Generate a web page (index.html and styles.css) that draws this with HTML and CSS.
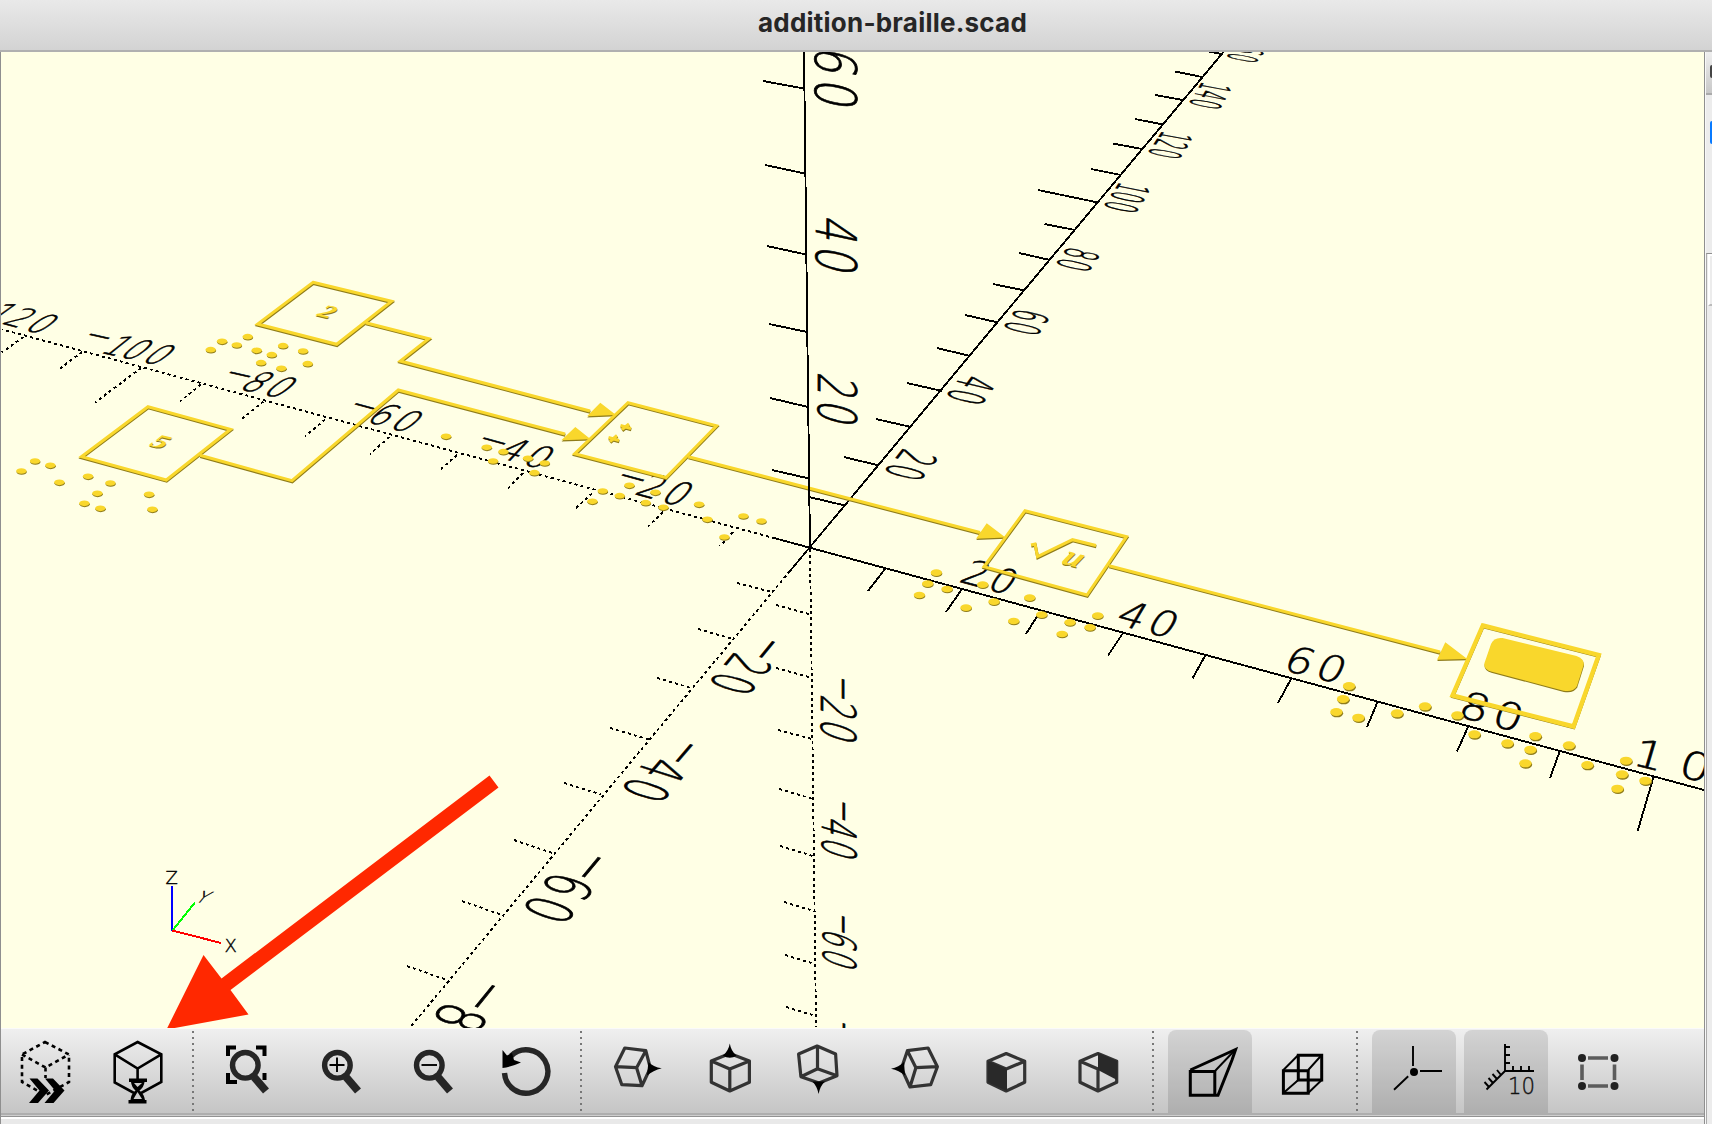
FILE: index.html
```html
<!DOCTYPE html>
<html lang="en">
<head>
<meta charset="utf-8">
<title>addition-braille.scad</title>
<link rel="stylesheet" href="styles.css">
</head>
<body>
<div class="window">
<header class="titlebar"><span class="title">addition-braille.scad</span></header>
<div class="workspace">
<main class="viewer">
<svg class="scene" viewBox="1 52 1703 976" width="1703" height="976">
<defs>
<marker id="dotS" class="dot" markerUnits="userSpaceOnUse" markerWidth="60" markerHeight="60" refX="0" refY="0" viewBox="-30 -30 60 60"><ellipse class="shade" cx="1" cy="3" rx="15.500" ry="8.500"/><ellipse class="face" rx="15.500" ry="8.500"/></marker>
<marker id="dotM" class="dot" markerUnits="userSpaceOnUse" markerWidth="60" markerHeight="60" refX="0" refY="0" viewBox="-30 -30 60 60"><ellipse class="shade" cx="1" cy="3" rx="17" ry="10"/><ellipse class="face" rx="17" ry="10"/></marker>
<marker id="dotL" class="dot" markerUnits="userSpaceOnUse" markerWidth="60" markerHeight="60" refX="0" refY="0" viewBox="-30 -30 60 60"><ellipse class="shade" cx="2" cy="4" rx="18.500" ry="12"/><ellipse class="face" rx="18.500" ry="12"/></marker>
</defs>

<!-- axes and tick marks -->
<g class="lines">
<path d="M775 538.300L1704 790M790 571L1016 300L1223.500 52"/>
<path d="M763 81L804 88.500M765 165L805 173.500M767 246L806 254.500M769 324L807 332M770 398L808 407M772 470L809 478.500"/>
<path d="M809 497L845 505.500M844 457L879 465.500M876 419L911 427M907 383L942 391M937 348L970 356M965 315L998 322.500M993 284L1024.500 290.500M1019 253L1050 260M1044.500 224L1075 230M1038 190L1098 202.500M1091 169L1121 175M1113 143.500L1142 149M1135 119L1163 124.500M1155 95L1183 100M1175 71.500L1202 77M1209 51.700L1221.600 54"/>
<path d="M885 569L868 591M962 589L946 612M1038 615L1026 634M1123 633L1108 655.500M1205.500 655L1192.500 678.500M1291 679L1278 703M1377.500 702L1367 727M1468 727L1457 751.500M1559.500 752L1550 778M1653.500 777L1637.500 831.500"/>
<g class="dashed">
<path d="M775 538.300L1.700 329.300M790 571L410 1027.500M810 549L811 623L816 1027"/>
<path d="M776 605L809 614M776 668L812 678M778 730L812 739M779 789L813 799M780 846L813 856M784 902L814 911M785 955L815 964M786 1007L816 1016"/>
<path d="M737 583L772 592M698 629L731 638.500M657 678L691 688M610 728L649 739.500M564 783L601 794.500M514 840L554 853.500M462 901L502 915M407 966L447 980"/>
<path d="M733 532L720 546M663 512L648 526.500M592 493.500L576 508M523 473L508 488.500M457 455L441 469M389.500 437L370 454M325 419.500L305 436.500M263.500 401.500L242 418.500M201 384.500L180 401.500M141 368L95 402.500M82 352L60 368.500M23.500 337L1.700 352.500"/>
</g>
</g>

<!-- scale labels, laid in the plane of their axis -->
<g class="labels">
<g transform="translate(0 260) scale(.33333)">
<text transform="matrix(44 12 -69 49 73 209) scale(.0196 .0137)" x="-239 -146 -82 -6.600" y="-20 0 0 0">−120</text>
<text transform="matrix(45 10 -67 53 425 305) scale(.0196 .0137)" x="-239 -146 -82 -6.600" y="-20 0 0 0">−100</text>
<text transform="matrix(47 11 -67 54 788 403) scale(.0196 .0137)" x="-161 -82 -6.600" y="-14 0 0">−80</text>
<text transform="matrix(48 13 -63 55 1169 504) scale(.0196 .0137)" x="-161 -82 -6.600" y="-14 0 0">−60</text>
</g>
<g transform="translate(420 360) scale(.33333)">
<text transform="matrix(51 14 -55 58 307 312) scale(.0196 .0137)" x="-161 -82 -6.600" y="-14 0 0">−40</text>
<text transform="matrix(51 14 -57 62 722 424) scale(.0196 .0137)" x="-161 -82 -6.600" y="-14 0 0">−20</text>
</g>
<g transform="translate(740 0) scale(.35077 .33333)">
<text transform="matrix(0 66 -119 -24 214 240) scale(.0196 .0137)" x="-82 -6.600">60</text>
<text transform="matrix(0 61 -116 -27 217 740) scale(.0196 .0137)" x="-82 -6.600">40</text>
<text transform="matrix(-11 15 -82 -16 1398 159) scale(.0196 .0137)" x="-146 -82 -6.600">160</text>
<text transform="matrix(-10 18 -85 -17 1290 295) scale(.0196 .0137)" x="-146 -82 -6.600">140</text>
<text transform="matrix(-11 18 -88 -17 1174 443) scale(.0196 .0137)" x="-146 -82 -6.600">120</text>
<text transform="matrix(-12 20 -89 -19 1049 602) scale(.0196 .0137)" x="-146 -82 -6.600">100</text>
<text transform="matrix(-14 22 -92 -21 914 774) scale(.0196 .0137)" x="-82 -6.600">80</text>
</g>
<g transform="translate(740 300) scale(.33333)">
<text transform="matrix(-16 24 -101 -22 806 62) scale(.0196 .0137)" x="-82 -6.600">60</text>
<text transform="matrix(-20 27 -105 -25 637 265) scale(.0196 .0137)" x="-82 -6.600">40</text>
<text transform="matrix(-23 29 -107 -26 454 490) scale(.0196 .0137)" x="-82 -6.600">20</text>
<text transform="matrix(0 54 -116 -27 233 302) scale(.0196 .0137)" x="-82 -6.600">20</text>
<text transform="matrix(55 15 -45 67 742 868) scale(.0196 .0137)" x="-82 -6.600">20</text>
</g>
<g transform="translate(900 480) scale(.33333)">
<text transform="matrix(62 17 -42 71 740 457) scale(.0196 .0137)" x="-82 -6.600">40</text>
</g>
<g transform="translate(1280 600) scale(.33333)">
<text transform="matrix(64 16 -36 74 106 234) scale(.0196 .0137)" x="-82 -6.600">60</text>
<text transform="matrix(68 18 -29 78 638 377) scale(.0196 .0137)" x="-82 -6.600">80</text>
<text transform="matrix(72 18 -24 81 1306 556) scale(.0196 .0137)" x="-180 -82 -6.600">100</text>
</g>
<g transform="translate(380 620) scale(.33333)">
<text transform="matrix(-31 38 -119 -35 1015 155) scale(.0196 .0137)" x="-161 -82 -6.600" y="-14 0 0">−20</text>
<text transform="matrix(-35 41 -121 -39 756 471) scale(.0196 .0137)" x="-161 -82 -6.600" y="-14 0 0">−40</text>
<text transform="matrix(-39 47 -129 -44 463 824) scale(.0196 .0137)" x="-161 -82 -6.600" y="-14 0 0">−60</text>
<text transform="matrix(-42 52 -132 -46 135 1222) scale(.0196 .0137)" x="-161 -82 -6.600" y="-14 0 0">−80</text>
<text transform="matrix(0 47 -105 -32 1323 297) scale(.0196 .0137)" x="-161 -82 -6.600" y="-14 0 0">−20</text>
<text transform="matrix(0 42 -103 -31 1326 653) scale(.0196 .0137)" x="-161 -82 -6.600" y="-14 0 0">−40</text>
<text transform="matrix(0 39 -99 -33 1329 984) scale(.0196 .0137)" x="-161 -82 -6.600" y="-14 0 0">−60</text>
<text transform="matrix(0 37 -97 -32 1332 1300) scale(.0196 .0137)" x="-161 -82 -6.600" y="-14 0 0">−80</text>
</g>
</g>

<!-- block diagram, drawn once as the shaded underside and once as the lit face -->
<g class="under" transform="translate(.3 1.200)">
<g class="model">
<path d="M365.700 322.700L428.700 338.700L400.300 361L590 411M200 455.300L292 480.700L398.300 390L565 434M688.300 456.700L980 532.500M1109 565.700L1440 652"/>
<path d="M313 282.300L391.500 301.300L336.700 344.300L257.700 324ZM148 406.700L230.500 429.300L166.300 480L81.500 456.700ZM628 402.700L716.500 425.700L666 477.500L574.700 453.700ZM1025 510.700L1126.500 536.700L1087 595L984 566.700ZM1482.800 625.500L1598.800 655L1573.500 726.500L1452.500 695.500Z"/>
<path d="M1031 545L1035 544L1037.500 556.500L1072.500 539.700L1096 545.500"/>
<path d="M620.500 425.500L631 428.500M629 424L622 429.500M608.500 437.500L619 440.500M617 435.500L610 441.500"/>
</g>
<g class="solid">
<path d="M600.300 402.700L616 415L587 416.300ZM575.300 427L590.700 439.300L561.300 440.300ZM986.700 523.300L1005.500 537.500L976 538.700ZM1445.300 642.300L1467.300 659L1437 659.700Z"/>
<path d="M1502.500 638L1576.500 656Q1585 659 1583.500 665.500L1577 686Q1573.500 692.500 1563.500 690.700L1491 671.500Q1483 669 1484.500 663L1491 644Q1494 637 1502.500 638Z"/>
<text class="num" transform="matrix(1.150 .28 -.8 .64 314.500 315)">2</text>
<text class="num" transform="matrix(1.200 .3 -.8 .66 147.500 445)">5</text>
<text class="var" transform="matrix(1 .26 -.55 .8 1060 563)">u</text>
</g>
</g>
<g class="lit">
<g class="model">
<path d="M365.700 322.700L428.700 338.700L400.300 361L590 411M200 455.300L292 480.700L398.300 390L565 434M688.300 456.700L980 532.500M1109 565.700L1440 652"/>
<path d="M313 282.300L391.500 301.300L336.700 344.300L257.700 324ZM148 406.700L230.500 429.300L166.300 480L81.500 456.700ZM628 402.700L716.500 425.700L666 477.500L574.700 453.700ZM1025 510.700L1126.500 536.700L1087 595L984 566.700Z"/>
<path class="thick" d="M1482.800 625.500L1598.800 655L1573.500 726.500L1452.500 695.500Z"/>
<path d="M1031 545L1035 544L1037.500 556.500L1072.500 539.700L1096 545.500"/>
<path d="M620.500 425.500L631 428.500M629 424L622 429.500M608.500 437.500L619 440.500M617 435.500L610 441.500"/>
</g>
<g class="solid">
<path d="M600.300 402.700L616 415L587 416.300ZM575.300 427L590.700 439.300L561.300 440.300ZM986.700 523.300L1005.500 537.500L976 538.700ZM1445.300 642.300L1467.300 659L1437 659.700Z"/>
<path d="M1502.500 638L1576.500 656Q1585 659 1583.500 665.500L1577 686Q1573.500 692.500 1563.500 690.700L1491 671.500Q1483 669 1484.500 663L1491 644Q1494 637 1502.500 638Z"/>
<text class="num" aria-hidden="true" transform="matrix(1.150 .28 -.8 .64 314.500 315)">2</text>
<text class="num" aria-hidden="true" transform="matrix(1.200 .3 -.8 .66 147.500 445)">5</text>
<text class="var" aria-hidden="true" transform="matrix(1 .26 -.55 .8 1060 563)">u</text>
</g>
</g>

<!-- braille dots -->
<g class="braille">
<polyline class="small" transform="translate(0 260) scale(.33333)" points="632,269 666,244 710,255 743,230 770,271 815,284 849,257 909,273 783,308 844,325 923,311 105,603 64,633 151,616 178,667 264,649 331,669 292,700 253,730 301,745 447,703 457,748"/>
<polyline class="small" transform="translate(420 360) scale(.33333)" points="78,229 200,262 250,275 219,303 324,295 374,309 343,338 548,393 517,424 599,407 628,376 706,397 677,428 730,442 837,433 862,478 913,531 970,468 1024,483"/>
<polyline class="medium" transform="translate(740 300) scale(.33333)" points="589,818 563,851 621,867 538,885 728,854 678,923 762,905 869,893 821,963"/>
<polyline class="medium" transform="translate(900 480) scale(.33333)" points="425,404 510,427 570,442 593,407 486,462"/>
<polyline class="large" transform="translate(1280 600) scale(.33333)" points="207,258 189,297 169,336 235,353 351,340 435,319 532,346 583,403 682,430 766,408 751,449 736,490 867,436 922,495 1038,482 1026,523 1012,566 1096,542"/>
</g>

<path class="zaxis" d="M804 52L807 310L810 548"/>

<!-- orientation gizmo -->
<g class="gizmo">
<path stroke="#00f" d="M172 886V931"/><path stroke="#0f0" d="M172.500 930.500L195 902.500"/><path stroke="#f00" d="M172.500 930.500L221 943"/>
<text x="165.500" y="883.500">Z</text>
<text transform="matrix(1 .1 -.7 .85 194 902)">Y</text>
<text x="224.500" y="952">X</text>
</g>
<path class="pointer" d="M489.500 775.500L498.500 787.500L230.500 990L248.500 1014.500L166.500 1029.500L203.500 955L221.500 978.500Z"/>
</svg>

<nav class="toolbar">
<button><svg viewBox="4 1030 84 83"><path class="line dash" d="M45 1042L69 1054.500V1082L45.500 1095L22 1082V1054.500ZM22 1054.500L45.500 1067.500L69 1054.500M45.500 1067.500V1078"/><path d="M29.500 1078.500H37.500L49 1090.500L38 1103H29L39.500 1090.500ZM45 1078.500H53L64.500 1090.500L53.500 1103H44.500L55 1090.500Z"/></svg></button>
<button><svg viewBox="96 1030 84 83"><path class="line" d="M137.600 1042L161.300 1054.300V1082L137.600 1095L114.700 1082.500V1054.300ZM114.700 1054.300L137.600 1068.500L161.300 1054.300M137.600 1068.500V1079"/><path d="M129 1078.500H147V1082H144.500Q144 1087 139.500 1090.500Q144 1094 145 1100H146.500V1103.500H128.500V1100H130.500Q131 1094 135.500 1090.500Q131.500 1087 131 1082H129Z"/><path class="cut" d="M134 1083H142L137.500 1087ZM133.500 1099L137.500 1092L142 1099Z"/></svg></button>
<span class="sep"></span>
<button><svg viewBox="208 1030 84 83"><path class="line w4" d="M228 1056V1047.500H236M256 1047.500H264.500V1056M228 1073V1082H237M264.500 1073V1080"/><circle class="lens" cx="245.300" cy="1065.300" r="12.800"/><path class="handle" d="M254 1077L266 1091"/></svg></button>
<button><svg viewBox="300 1030 84 83"><circle class="lens" cx="337.400" cy="1065.300" r="12.800"/><path class="handle" d="M346 1077L358 1091"/><path class="line w2" d="M329.500 1065H344.500M337 1057.500V1072"/></svg></button>
<button><svg viewBox="392 1030 84 83"><circle class="lens" cx="429.300" cy="1065.300" r="12.800"/><path class="handle" d="M438 1077L450 1091"/><path class="line w2" d="M421.500 1065H437"/></svg></button>
<button><svg viewBox="484 1030 84 83"><path class="lens" d="M511 1056A21.700 21.700 0 1 1 504.500 1073"/><path d="M502.500 1050L507 1055.500L512 1053L514 1060L521 1062.500Q511 1067 502.500 1068Z"/></svg></button>
<span class="sep"></span>
<button><svg viewBox="596 1030 84 83"><path class="cube" d="M624.800 1048L645.800 1050.700L650.300 1068L642 1085.700L621.800 1084.700L615.500 1066.700ZM615.500 1066.700L636.600 1067.700L645.800 1050.700M636.600 1067.700L642 1085.700"/><path d="M648.400 1062Q653 1067 661.800 1068.300Q653 1070.500 647 1075.500Z"/></svg></button>
<button><svg viewBox="688 1030 84 83"><path class="cube" d="M729.800 1053.500L749.400 1061V1082.300L729.800 1091L711.300 1082.300V1061ZM711.300 1061L729.800 1069L749.400 1061M729.800 1069V1091"/><path d="M729.800 1043.500Q731 1051 736.500 1055.700Q730 1060 722.800 1055.700Q728.500 1051 729.800 1043.500Z"/></svg></button>
<button><svg viewBox="780 1030 84 83"><path class="cube" d="M817.100 1046L835.600 1054L837 1075.700L819 1083L800.900 1076.700L798.600 1054ZM800.900 1076.700L817.500 1068.700L837 1075.700M817.500 1068.700V1046"/><path d="M812.300 1081.500H825Q820 1086 818.600 1094Q817 1086 812.300 1081.500Z"/></svg></button>
<button><svg viewBox="872 1030 84 83"><path class="cube" d="M907.400 1050.700L928.100 1048L937.400 1066.700L930.700 1084.700L910 1087L901.500 1068.300ZM937.400 1066.700L915.900 1067.700L907.400 1050.700M915.900 1067.700L910 1087"/><path d="M904 1062Q899 1067 891 1068.700Q899 1070.500 905 1075.500Z"/></svg></button>
<button><svg viewBox="964 1030 84 83"><path class="cube" d="M1006.200 1053.500L1024.700 1061.300V1082.300L1006.200 1091L988 1082.300V1061.300ZM988 1061.300L1006.200 1069L1024.700 1061.300"/><path fill="#292929" d="M988 1061.300L1007 1069V1091L988 1082.300Z"/></svg></button>
<button><svg viewBox="1056 1030 84 83"><path class="cube" d="M1098 1053.500L1116.700 1061.300V1082.300L1098 1091L1080 1082.300V1061.300ZM1080 1061.300L1098 1069V1091"/><path fill="#292929" d="M1098 1053L1117 1061V1080L1098 1070Z"/></svg></button>
<span class="sep"></span>
<button class="on"><svg viewBox="1168 1030 84 83"><path class="line w3" d="M1190.300 1071.500H1214.800V1095.300H1190.300ZM1190.300 1070L1235.600 1049.500L1232 1060L1218 1095.300H1214"/><path class="line w2" d="M1215 1071L1235 1050"/></svg></button>
<button><svg viewBox="1260 1030 84 83"><path class="line w3" d="M1283.400 1070.700H1308.200V1093.300H1283.400ZM1298.300 1055.300H1321.700V1080H1298.300Z"/><path class="line w2" d="M1283.400 1070L1298.300 1055M1308.200 1070L1321.700 1055M1308.200 1093L1321.700 1080M1283.400 1093L1298.300 1080"/></svg></button>
<span class="sep"></span>
<button class="on"><svg viewBox="1372 1030 84 83"><circle cx="1414" cy="1072" r="4"/><path class="line w2" d="M1413 1046V1066M1420 1071H1442M1408.200 1076.300L1394 1089.700"/></svg></button>
<button class="on"><svg viewBox="1464 1030 84 83"><path class="line w2" d="M1505 1044V1071H1534M1505 1047H1510M1505 1055H1510M1505 1063H1510M1513 1071V1066M1521 1071V1066M1529 1071V1066M1505 1071L1486.500 1089.500M1501 1075L1497 1070M1497 1079L1492.500 1074M1493 1083L1488.500 1078M1489 1087L1484.500 1082"/><text x="1508" y="1093.500" textLength="27" lengthAdjust="spacingAndGlyphs">10</text></svg></button>
<button><svg viewBox="1556 1030 84 83"><path class="edge" d="M1588 1058H1608M1588 1086H1608M1582 1064.500V1080M1614.500 1064.500V1080"/><g fill="#222"><circle cx="1582" cy="1058" r="4"/><circle cx="1614.500" cy="1058" r="4"/><circle cx="1582" cy="1086" r="4"/><circle cx="1614.500" cy="1086" r="4"/></g></svg></button>
</nav>
<div class="splitter"></div>
</main>
<aside class="side">
<div class="side-head"><i></i></div>
<div class="side-body"><i></i></div>
<div class="side-list"><i></i></div>
</aside>
</div>
</div>
</body>
</html>
```
FILE: styles.css
```css
* { box-sizing: border-box; }
body { margin: 0; background: #ececec; overflow: hidden; }
.window { width: 1712px; height: 1124px; display: flex; flex-direction: column; }
.titlebar {
  height: 52px; flex: none; padding: 6px 0 0 758px;
  background: linear-gradient(#e9e9e9, #d3d3d3);
  border-bottom: 2px solid #b0b0b0;
  font: 700 26px/34px Inter, "Liberation Sans", sans-serif; color: #262626;
}
.title { display: inline-block; white-space: nowrap; letter-spacing: .22px; }
.workspace { flex: 1; display: flex; min-height: 0; }
.viewer {
  width: 1705px; flex: none; display: flex; flex-direction: column;
  border-left: 1px solid #8f8f8f; border-right: 1px solid #8f8f8f;
}
.scene { display: block; flex: none; background: #ffffe5; }

.lines path, .zaxis { fill: none; stroke: #000; stroke-width: 1.9; shape-rendering: crispEdges; }
.lines .dashed path { stroke-dasharray: 3 3.2; }
.labels text {
  font: 200 100px "DejaVu Sans", sans-serif; fill: #000;
  stroke: #000; stroke-width: .7px; vector-effect: non-scaling-stroke;
}
.model path { fill: none; stroke-width: 3px; }
.model .thick { stroke-width: 4.4px; }
.under { fill: #8f7c1a; stroke: #8f7c1a; }
.lit { fill: #f9d72c; stroke: #f9d72c; }
.solid { stroke: none; }
.num { font: bold 24px "Liberation Serif", serif; }
.var { font: italic bold 32px "Liberation Serif", serif; }
.dot { overflow: visible; }
.shade { fill: #8f7c1a; }
.face { fill: #f9d72c; }
.braille polyline { fill: none; stroke: none; }
.small { marker: url(#dotS); }
.medium { marker: url(#dotM); }
.large { marker: url(#dotL); }
.gizmo path { fill: none; stroke-width: 2px; shape-rendering: crispEdges; }
.gizmo text { font: 200 18px "DejaVu Sans", sans-serif; fill: #000; stroke: #000; stroke-width: .4px; }
.pointer { fill: #ff2800; }

.toolbar {
  height: 85px; flex: none; display: flex; padding: 1px 0 0 3px;
  background: linear-gradient(#efefef, #c5c5c5); border-top: 1px solid #fafafa;
}
.toolbar button {
  width: 84px; height: 83px; margin: 0 8px 0 0; padding: 0; border: 0;
  background: none; border-radius: 8px 8px 0 0; flex: none;
}
.toolbar button:has(+ .sep) { margin-right: 0; }
.toolbar .on { background: rgba(0, 0, 0, .115); }
.toolbar svg { display: block; width: 84px; height: 83px; }
.sep {
  width: 28px; flex: none; height: 81px;
  background: repeating-linear-gradient(#777 0 2px, transparent 2px 6px) 12px 1px / 2px 80px no-repeat;
}
.line, .cube, .lens, .handle, .edge { fill: none; stroke: #000; stroke-width: 2.6; }
.line.w2 { stroke-width: 1.9; }
.line.w3 { stroke-width: 3; }
.line.w4 { stroke-width: 4; }
.line.dash { stroke-dasharray: 4 3.6; }
.cube { stroke: #333; stroke-width: 3.2; stroke-linejoin: round; }
.lens { stroke: #262626; stroke-width: 5.4; }
.handle { stroke: #262626; stroke-width: 7.8; }
.edge { stroke: #5c5c5c; stroke-width: 3.6; }
.cut { fill: #ccc; }
.toolbar text { font: 200 23px "DejaVu Sans", sans-serif; fill: #111; stroke: #111; stroke-width: .4px; }
.splitter {
  flex: 1;
  background: linear-gradient(#aeaeae 0 2px, #cecece 2px 3px, #929292 3px 4px, #fff 4px 6px, #e9e9e9 6px);
}
.side { flex: 1; display: flex; flex-direction: column; background: #ececec; border-left: 1px solid #f8f8f8; }
.side-head { height: 43px; background: linear-gradient(#efefef, #c8c8c8); border-bottom: 2px solid #aaa; padding: 13px 0 0 4px; }
.side-head i { display: block; height: 13px; background: #444; border-radius: 6px 0 0 6px; }
.side-body { height: 158px; padding: 26px 0 0 4px; }
.side-body i { display: block; height: 23px; background: #087aff; border-radius: 5px 0 0 5px; }
.side-list { flex: 1; border-top: 1px solid #8f8f8f; border-left: 1px solid #aaa; }
.side-list i { display: block; height: 52px; margin-left: 1px; border: 2px solid #fff; border-right: 0; border-bottom-color: #bbb; }
```
